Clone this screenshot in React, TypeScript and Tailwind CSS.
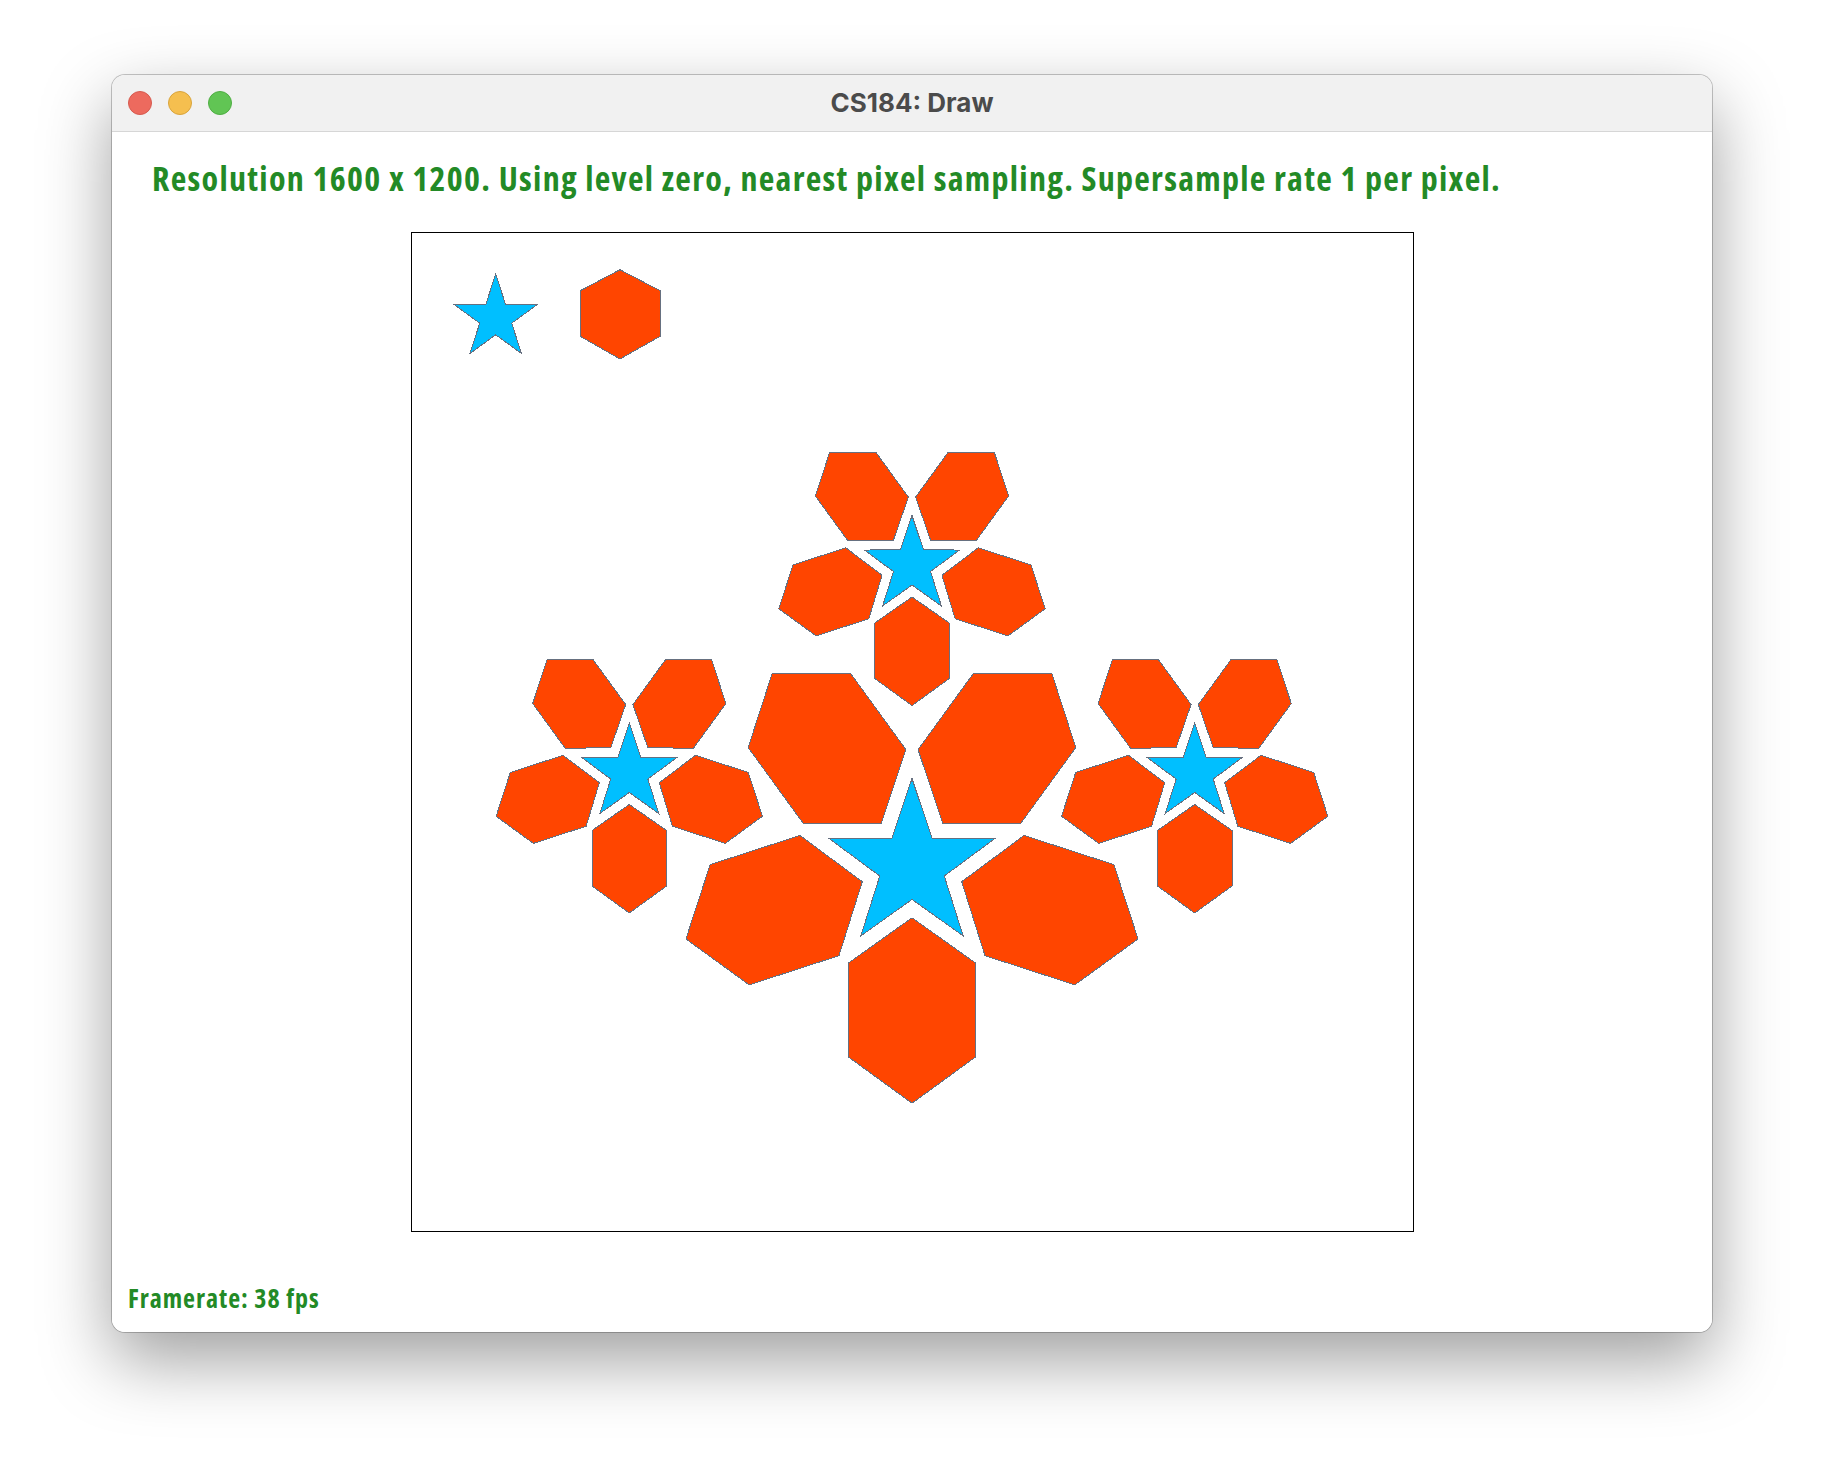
import React from "react";

type Pt = [number, number];

const HEX_SMALL: Pt[] = [[0, 31.5], [37.3, 57.5], [37.3, 113], [0, 140], [-37.3, 113], [-37.3, 57.5]];
const HEX_BIG: Pt[] = [[0, 52.3], [63.2, 97.3], [63.2, 191.7], [0, 237.7], [-63.2, 191.7], [-63.2, 97.3]];

const starPoints = (cx: number, cy: number, R: number, ratio = 0.39) => {
  const pts: string[] = [];
  for (let i = 0; i < 10; i++) {
    const r = i % 2 === 0 ? R : R * ratio;
    const a = ((-90 + i * 36) * Math.PI) / 180;
    pts.push(`${(cx + r * Math.cos(a)).toFixed(2)},${(cy + r * Math.sin(a)).toFixed(2)}`);
  }
  return pts.join(" ");
};

const Flower = ({ cx, cy, R, hex }: { cx: number; cy: number; R: number; hex: Pt[] }) => {
  const local = hex.map(([x, y]) => `${cx + x},${cy + y}`).join(" ");
  return (
    <g>
      <polygon points={starPoints(cx, cy, R)} fill="#00bfff" stroke="#667080" strokeWidth={1} />
      {[0, 72, 144, 216, 288].map((deg) => (
        <polygon
          key={deg}
          points={local}
          transform={`rotate(${deg} ${cx} ${cy})`}
          fill="#ff4500"
          stroke="#667080"
          strokeWidth={1}
        />
      ))}
    </g>
  );
};

export default function App() {
  return (
    <div className="w-[1824px] h-[1480px] bg-white pt-[75px] pl-[112px] overflow-hidden">
      <div className="w-[1600px] rounded-[13px] overflow-hidden bg-white shadow-[0_0_0_1px_rgba(0,0,0,0.22),0_28px_70px_rgba(0,0,0,0.38)]">
        {/* title bar */}
        <div className="relative h-[57px] bg-[#f1f1f1] border-b border-[#d6d6d6] flex items-center justify-center">
          <div className="absolute left-[16px] top-[16px] flex gap-[16px]">
            <span className="w-[24px] h-[24px] rounded-full bg-[#ed6a5e] border border-[#d65a4f]" />
            <span className="w-[24px] h-[24px] rounded-full bg-[#f5bf4f] border border-[#d9a43c]" />
            <span className="w-[24px] h-[24px] rounded-full bg-[#61c554] border border-[#4fae43]" />
          </div>
          <span className="font-['Inter','Liberation_Sans',sans-serif] font-bold text-[26px] text-[#4b4b4b] leading-none">
            CS184: Draw
          </span>
        </div>

        {/* render area */}
        <div className="relative h-[1200px] bg-white pt-[100px] pl-[299px]">
          <div className="w-[1003px] h-[1000px] border border-black">
            <svg width={1001} height={998} viewBox="412 234 1001 998" shapeRendering="crispEdges" className="block">
              <polygon points={starPoints(495.7, 319, 44, 0.382)} fill="#00bfff" stroke="#667080" strokeWidth={1} />
              <polygon
                points="620,270.7 660,291.7 660,337.3 620,360 580.3,337.3 580.3,291.7"
                fill="#ff4500"
                stroke="#667080"
                strokeWidth={1}
              />
              <Flower cx={912} cy={566.5} R={50} hex={HEX_SMALL} />
              <Flower cx={629.3} cy={774} R={50} hex={HEX_SMALL} />
              <Flower cx={1194.7} cy={774} R={50} hex={HEX_SMALL} />
              <Flower cx={912} cy={866.5} R={87} hex={HEX_BIG} />
            </svg>
          </div>

          <div className="absolute left-[40px] top-[29px] font-['Open_Sans','Liberation_Sans',sans-serif] [font-stretch:75%] tracking-[0.038em] font-bold text-[34px] leading-none text-[#238a26] whitespace-nowrap">
            Resolution 1600 x 1200. Using level zero, nearest pixel sampling. Supersample rate 1 per pixel.
          </div>
          <div className="absolute left-[16px] bottom-[21px] font-['Open_Sans','Liberation_Sans',sans-serif] [font-stretch:75%] tracking-[0.037em] font-bold text-[26px] leading-none text-[#238a26] whitespace-nowrap">
            Framerate: 38 fps
          </div>
        </div>
      </div>
    </div>
  );
}
